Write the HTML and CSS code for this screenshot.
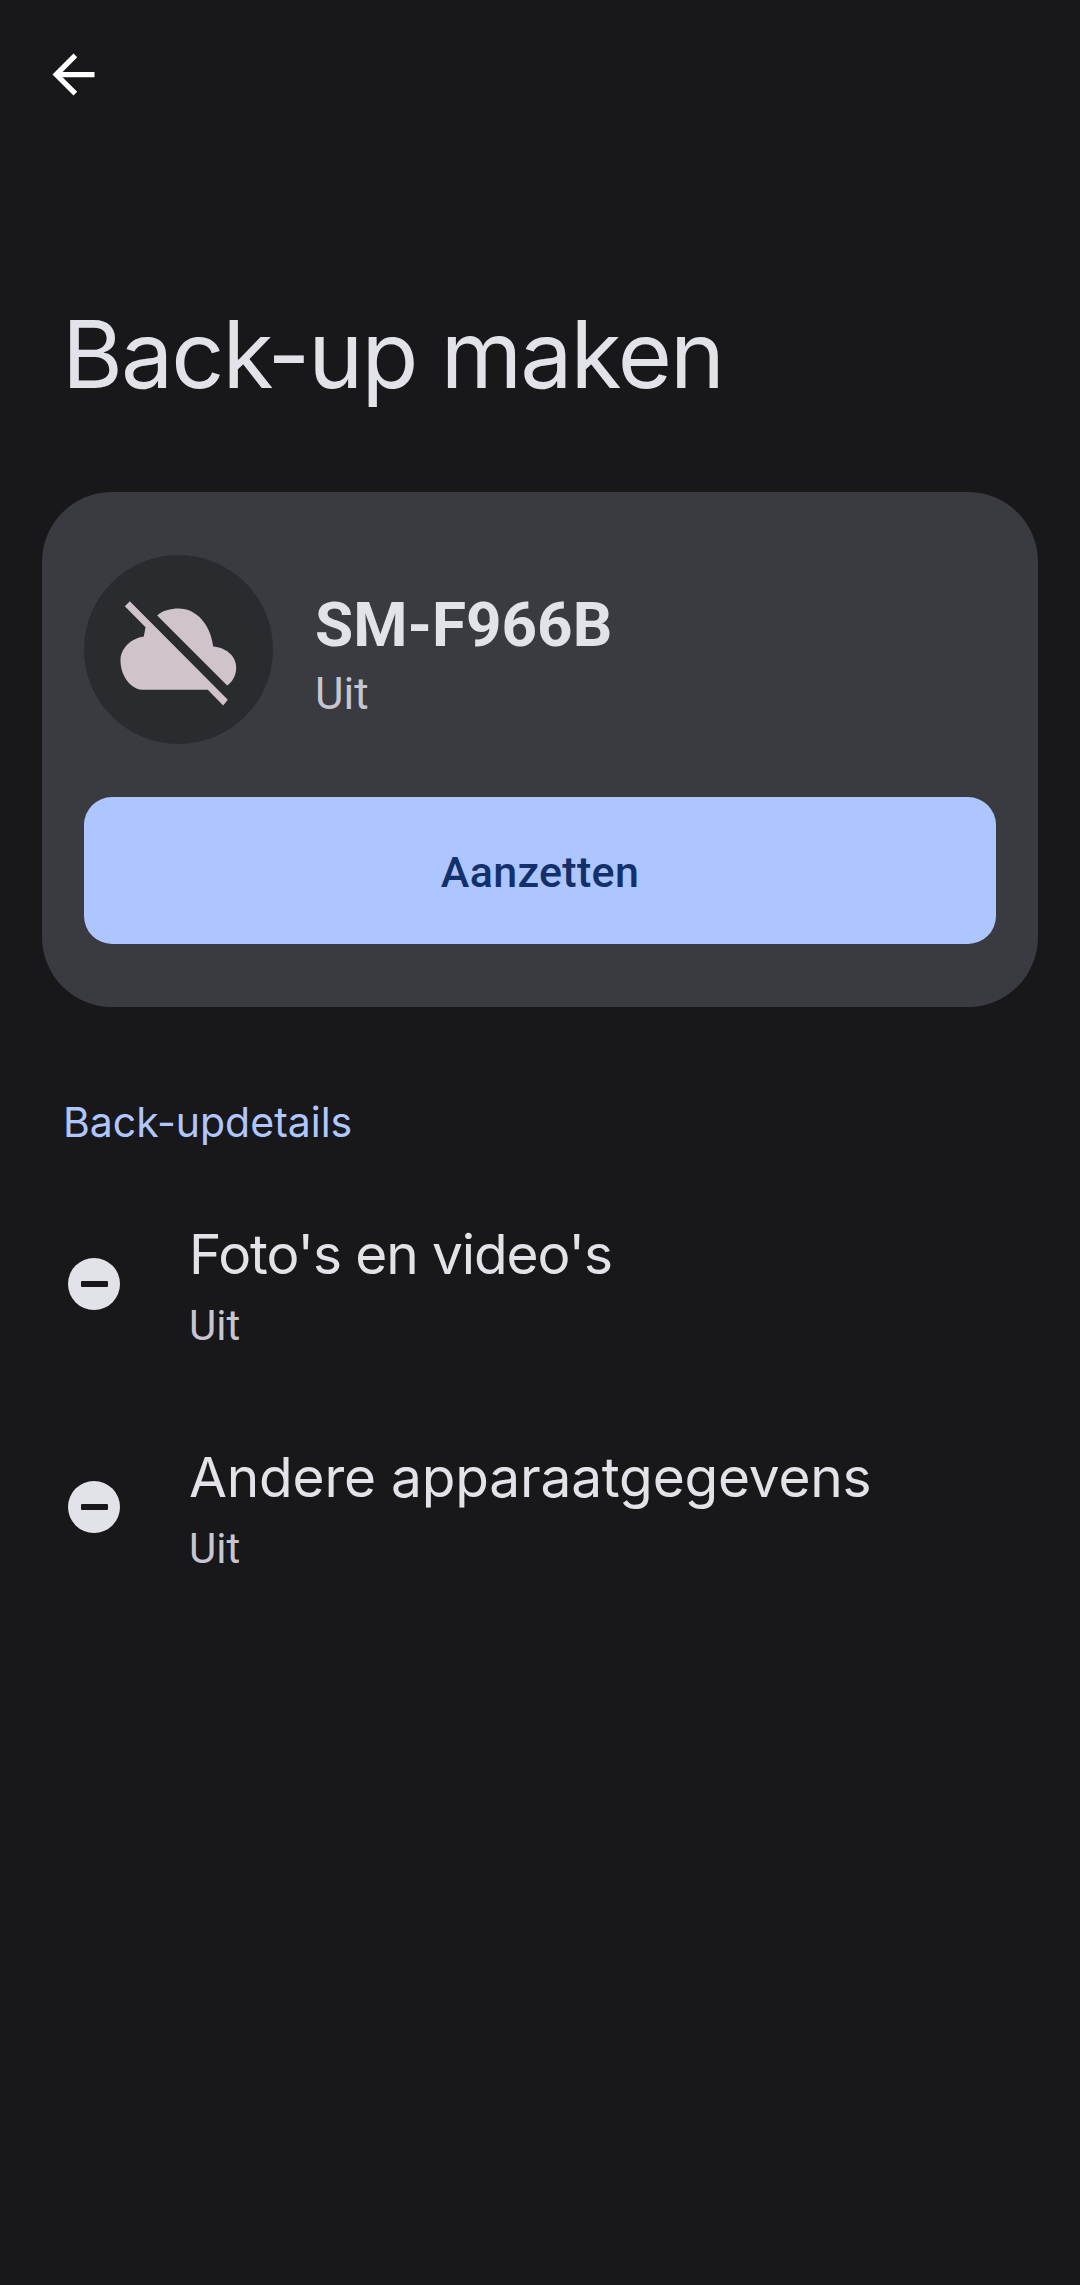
FILE: index.html
```html
<!DOCTYPE html>
<html lang="nl">
<head>
<meta charset="utf-8">
<title>Back-up maken</title>
<link rel="stylesheet" href="styles.css">
</head>
<body>
<main class="screen">
  <header class="topbar">
    <svg class="back" viewBox="0 0 24 24" aria-label="Terug"><path d="M20 11H7.83l5.59-5.59L12 4l-8 8 8 8 1.41-1.41L7.83 13H20v-2z"/></svg>
  </header>
  <h1 class="title">Back-up maken</h1>
  <section class="card">
    <div class="device">
      <div class="avatar">
        <svg class="cloud" viewBox="8.5 -0.5 160 160" aria-hidden="true"><path d="M66.7 45C72 40 80 38 88 38C106 38 120 54 122.7 76C135 77 145.7 85 145.7 97C145.7 105 142 111 136.7 115Z"/><path d="M34.3 35.7L39.3 30.7L137.3 129.3L132.7 135L117.3 119.3H53C40 119.3 30 105 30 90C30 78 40 68 53.3 66L55 56.7Z"/></svg>
      </div>
      <div class="device-text">
        <div class="device-name">SM-F966B</div>
        <div class="device-status">Uit</div>
      </div>
    </div>
    <button class="primary">Aanzetten</button>
  </section>
  <h2 class="section">Back-updetails</h2>
  <ul class="rows">
    <li class="row">
      <span class="minus"><span class="minus-bar"></span></span>
      <div class="row-text"><div class="row-title row-title-tight">Foto's en video's</div><div class="row-sub">Uit</div></div>
    </li>
    <li class="row">
      <span class="minus"><span class="minus-bar"></span></span>
      <div class="row-text"><div class="row-title row-title-wide">Andere apparaatgegevens</div><div class="row-sub">Uit</div></div>
    </li>
  </ul>
</main>
</body>
</html>
```
FILE: styles.css
```css
* { box-sizing: border-box; }
html, body { margin: 0; padding: 0; }
body { background: #18181b; font-family: "Roboto", "Liberation Sans", sans-serif; }
.screen { width: 1080px; height: 2285px; overflow: hidden; background: #18181b; }
.topbar { height: 268px; padding: 43px 0 0 42px; }
.back { display: block; width: 63px; height: 63px; fill: #fff; }
.title { margin: 0 0 0 62px; height: 224px; font-family: "Inter", sans-serif; font-weight: 400; font-size: 93px; line-height: 172px; letter-spacing: -1.9px; color: #e2e3e9; }
.card { margin: 0 42px; height: 515px; padding: 63px 42px 0; border-radius: 70px; background: #3a3b40; }
.device { display: flex; align-items: center; gap: 42px; height: 189px; }
.avatar { width: 189px; height: 189px; border-radius: 50%; background: #2a2b2f; display: flex; align-items: center; justify-content: center; flex: none; }
.cloud { display: block; width: 160px; height: 160px; fill: #cfc3cc; flex: none; }
.device-text { padding-top: 9px; }
.device-name { font-size: 62px; font-weight: 700; line-height: 70px; color: #e2e3e9; }
.device-status { margin-top: 9px; font-size: 44px; line-height: 50px; color: #c5c6d0; }
.primary { display: block; width: 912px; height: 147px; margin-top: 53px; padding: 2px 0 0; border: 0; border-radius: 28px; background: #aec6ff; color: #14306b; font-family: "Roboto", sans-serif; font-weight: 500; font-size: 43px; letter-spacing: 0.3px; }
.section { margin: 85px 0 0 63px; height: 80px; font-family: "Inter", sans-serif; font-weight: 400; font-size: 41px; line-height: 60px; color: #b0c6ff; }
.rows { list-style: none; margin: 0; padding: 0; }
.row { display: flex; align-items: center; height: 223px; padding-left: 68px; }
.minus { width: 52px; height: 52px; border-radius: 50%; background: #e2e3e9; display: flex; align-items: center; justify-content: center; flex: none; margin-right: 69px; }
.minus-bar { width: 27px; height: 6px; border-radius: 1px; background: #18181b; }
.row-text { padding-top: 3px; }
.row-title { font-family: "Inter", sans-serif; font-weight: 400; font-size: 55px; line-height: 70px; color: #e2e3e9; }
.row-title-tight { letter-spacing: -1.1px; }
.row-title-wide { letter-spacing: -0.2px; }
.row-sub { margin-top: 12px; font-size: 42px; line-height: 50px; color: #c5c6d0; }
```
